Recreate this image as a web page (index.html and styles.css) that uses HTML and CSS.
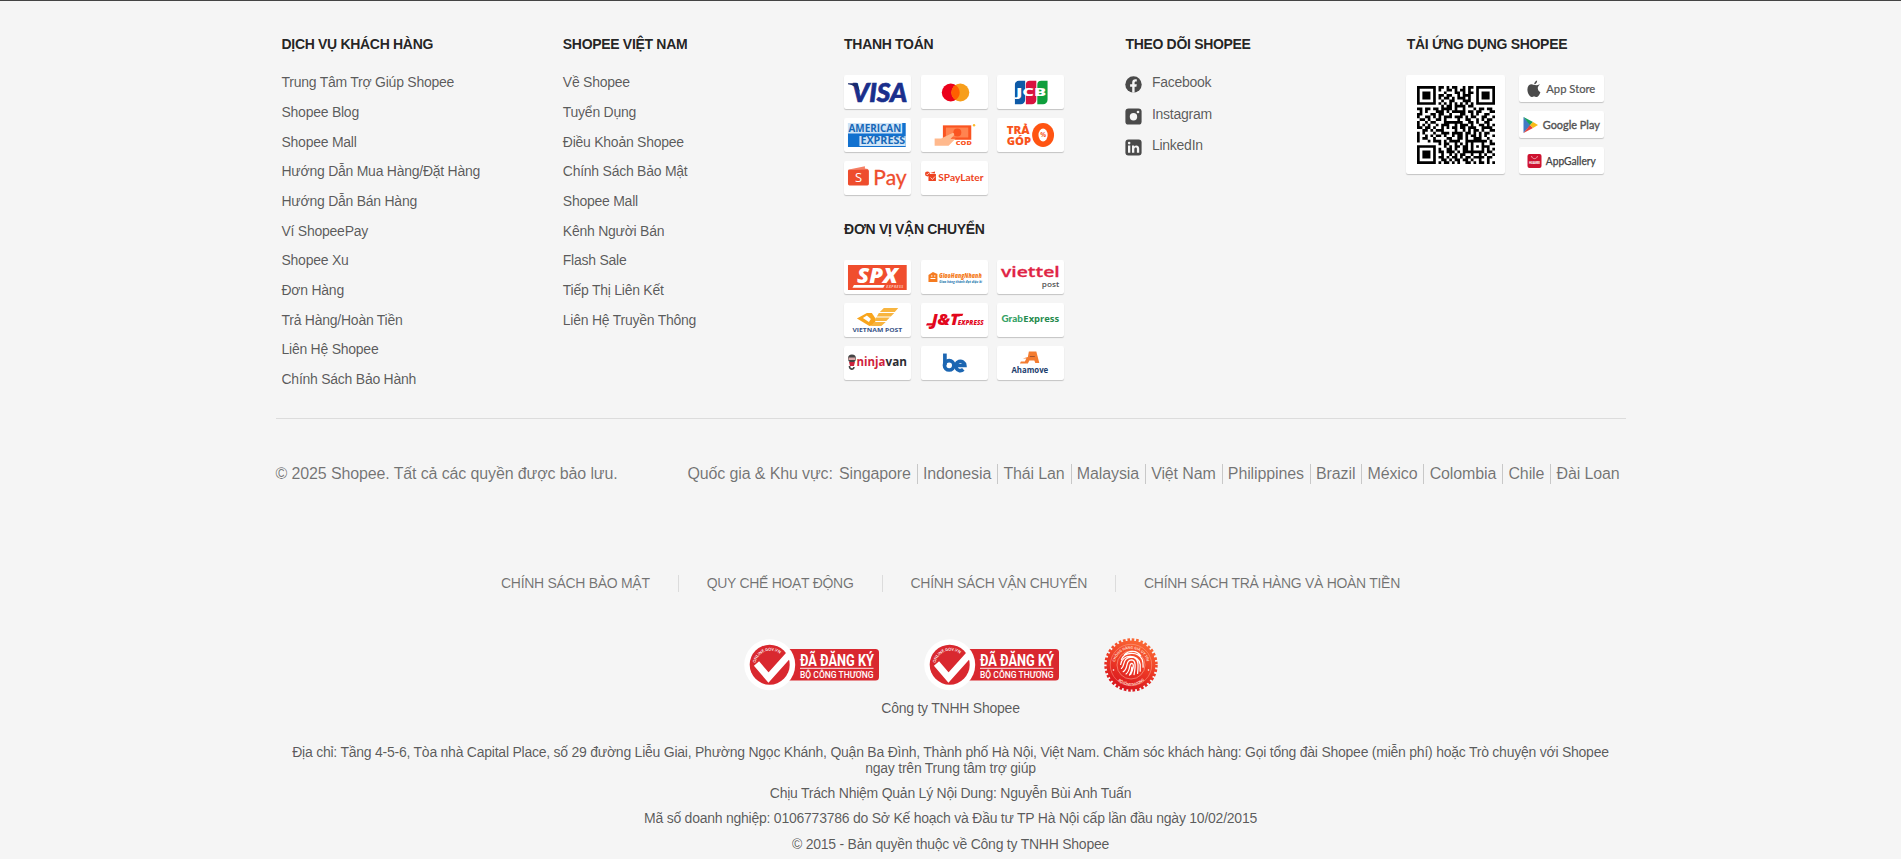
FILE: index.html
```
<!DOCTYPE html>
<html lang="vi">
<head>
<meta charset="utf-8">
<title>Shopee Việt Nam</title>
<link rel="stylesheet" href="styles.css">
</head>
<body>
<footer class="footer">
  <div class="columns">
    <section class="column">
      <h3 class="heading">DỊCH VỤ KHÁCH HÀNG</h3>
      <ul class="links">
        <li>Trung Tâm Trợ Giúp Shopee</li>
        <li>Shopee Blog</li>
        <li>Shopee Mall</li>
        <li>Hướng Dẫn Mua Hàng/Đặt Hàng</li>
        <li>Hướng Dẫn Bán Hàng</li>
        <li>Ví ShopeePay</li>
        <li>Shopee Xu</li>
        <li>Đơn Hàng</li>
        <li>Trả Hàng/Hoàn Tiền</li>
        <li>Liên Hệ Shopee</li>
        <li>Chính Sách Bảo Hành</li>
      </ul>
    </section>
    <section class="column">
      <h3 class="heading">SHOPEE VIỆT NAM</h3>
      <ul class="links">
        <li>Về Shopee</li>
        <li>Tuyển Dụng</li>
        <li>Điều Khoản Shopee</li>
        <li>Chính Sách Bảo Mật</li>
        <li>Shopee Mall</li>
        <li>Kênh Người Bán</li>
        <li>Flash Sale</li>
        <li>Tiếp Thị Liên Kết</li>
        <li>Liên Hệ Truyền Thông</li>
      </ul>
    </section>
    <section class="column">
      <h3 class="heading">THANH TOÁN</h3>
      <div class="tiles">
        <div class="tile"><svg viewBox="0 0 67.5 34">
          <text x="8" y="27.300" class="lato" font-weight="900" font-style="italic" font-size="26.500" fill="#1a2f8c" stroke="#1a2f8c" stroke-width=".7" textLength="55.500" lengthAdjust="spacingAndGlyphs">VISA</text>
          <path d="M4 8.300h9.500l2.500 8.700C13 12.500 9 10 4 9.300z" fill="#1a2a6c"/>
        </svg></div>
        <div class="tile"><svg viewBox="0 0 67.5 34">
          <circle cx="29.900" cy="17.500" r="9" fill="#eb001b"/><circle cx="39.500" cy="17.500" r="9" fill="#f79e1b"/>
          <path d="M34.700 9.900a9 9 0 0 1 0 15.200a9 9 0 0 1 0-15.200z" fill="#ff5f00"/>
        </svg></div>
        <div class="tile"><svg viewBox="0 0 67.5 34">
          <path d="M22 5.800h6.300v19a4.500 4.500 0 0 1-4.500 4.500h-5.800v-19.500a4 4 0 0 1 4-4z" fill="#0e5aa7"/>
          <path d="M33 5.800h6.500v19a4.500 4.500 0 0 1-4.500 4.500h-6v-19.500a4 4 0 0 1 4-4z" fill="#d8133f"/>
          <path d="M44.500 5.800h6.300v19a4.500 4.500 0 0 1-4.500 4.500h-5.800v-19.500a4 4 0 0 1 4-4z" fill="#0f9f3c"/>
          <text x="19" y="21" class="open" font-weight="800" font-size="9.800" fill="#fff" textLength="30.500" lengthAdjust="spacingAndGlyphs">JCB</text>
        </svg></div>
        <div class="tile"><svg viewBox="0 0 67.5 34">
          <path d="M4 5h58v24H4z" fill="#1271cf"/>
          <path d="M4 5h54.500v10.500H4zM15.500 18H62v10H15.500z" fill="#cfe4f7"/>
          <text x="4.500" y="13.600" class="open" font-weight="700" font-size="9.800" fill="#1768b8" textLength="53" lengthAdjust="spacingAndGlyphs">AMERICAN</text>
          <text x="16.500" y="26.500" class="open" font-weight="700" font-size="9.800" fill="#1768b8" textLength="45" lengthAdjust="spacingAndGlyphs">EXPRESS</text>
        </svg></div>
        <div class="tile"><svg viewBox="0 0 67.5 34">
          <path d="M22 7.300h28.500v14.500H22z" fill="#fa5421"/><path d="M25 9.500h22.500v10H25z" fill="#ff8350"/>
          <circle cx="36.500" cy="14.500" r="4" fill="#fa5421"/>
          <path d="M13.700 20.500h6.500l11-5.300c2-.8 3 1.200 1.500 2.500l-3 3h5l-7 7H13.700z" fill="#ffb98d"/>
          <text x="35" y="27" class="open" font-weight="800" font-size="5.500" fill="#fa5421" textLength="16" lengthAdjust="spacingAndGlyphs">COD</text>
          <circle cx="53.300" cy="7.200" r="1.200" fill="#fdbb2d"/>
        </svg></div>
        <div class="tile"><svg viewBox="0 0 67.5 34">
          <text x="9.800" y="16.300" class="open" font-weight="800" font-size="11" fill="#f8541b" textLength="23" lengthAdjust="spacingAndGlyphs">TRẢ</text>
          <text x="9.800" y="26.600" class="open" font-weight="800" font-size="11" fill="#f8541b" textLength="24.500" lengthAdjust="spacingAndGlyphs">GÓP</text>
          <ellipse cx="46.300" cy="17" rx="11" ry="12" fill="#ff5412"/><ellipse cx="46.300" cy="17" rx="4.600" ry="6.500" fill="#fff"/>
          <text x="46.300" y="19.400" class="open" font-weight="700" font-size="6.500" fill="#f8541b" text-anchor="middle">%</text>
        </svg></div>
        <div class="tile"><svg viewBox="0 0 67.5 34">
          <path d="M5 8.500l16-3.200v2.200l3 .5v1z" fill="#f58065"/>
          <rect x="4" y="8.500" width="21" height="16" rx="1.500" fill="#ee4d2d"/>
          <text x="14.700" y="21.300" class="open" font-size="13" fill="#fff" text-anchor="middle">S</text>
          <text x="29.500" y="24" class="lato" font-size="20.500" fill="#ee4d2d" stroke="#ee4d2d" stroke-width=".3" textLength="33.500" lengthAdjust="spacingAndGlyphs">Pay</text>
        </svg></div>
        <div class="tile"><svg viewBox="0 0 67.5 34">
          <path d="M7.500 13h7.500v7H7.500z" fill="#ee4321"/><circle cx="6.500" cy="13" r="2.500" fill="#ee4321"/>
          <path d="M5.300 12.800l1 1 1.800-2M9.500 16.500l2 2 2.500-3" fill="none" stroke="#fff" stroke-width=".7"/><path d="M9 12l5-1.500v2z" fill="#ee4321"/>
          <text x="17.300" y="20" class="lato" font-weight="700" font-size="8.600" fill="#ee4321" textLength="45.500" lengthAdjust="spacingAndGlyphs">SPayLater</text>
        </svg></div>
      </div>
      <h3 class="heading heading-second">ĐƠN VỊ VẬN CHUYỂN</h3>
      <div class="tiles">
        <div class="tile"><svg viewBox="0 0 67.5 34">
          <path d="M4 5h59v25H4z" fill="#f04e2e"/>
          <text x="13" y="23.300" class="open" font-weight="800" font-style="italic" font-size="22" fill="#fff" textLength="41" lengthAdjust="spacingAndGlyphs">SPX</text>
          <path d="M10 25h31l-1.500 2.800H8.500z" fill="#fff"/>
          <text x="42.500" y="27.700" class="open" font-weight="700" font-style="italic" font-size="3.600" fill="#fbc5b8" textLength="17">EXPRESS</text>
        </svg></div>
        <div class="tile"><svg viewBox="0 0 67.5 34">
          <path d="M7.500 15l4.500-3 4.500 2v8H7.500z" fill="#f57b20"/><path d="M9.500 18.500h5M10 16h1.500M13 16h1.500" stroke="#fff" stroke-width="1"/>
          <text x="18" y="18.300" class="open" font-weight="800" font-style="italic" font-size="6.500" fill="#f57b20" textLength="43" lengthAdjust="spacingAndGlyphs">GiaoHangNhanh</text>
          <text x="18.300" y="22.600" class="open" font-weight="700" font-style="italic" font-size="3.200" fill="#2278ae" textLength="43" lengthAdjust="spacingAndGlyphs">Giao hàng thành đạt diệu kì</text>
        </svg></div>
        <div class="tile"><svg viewBox="0 0 67.5 34">
          <text x="4" y="17.300" class="open" font-weight="600" font-size="15" fill="#df2445" stroke="#df2445" stroke-width=".3" textLength="59" lengthAdjust="spacingAndGlyphs">viettel</text>
          <text x="45" y="26.800" class="open" font-weight="600" font-size="7.800" fill="#555" textLength="17.500" lengthAdjust="spacingAndGlyphs">post</text>
        </svg></div>
        <div class="tile"><svg viewBox="0 0 67.5 34">
          <path d="M13 15.500l10-5.500h5l4 6-1.500 6-5 1z" fill="#f8a51c"/><path d="M19 15l4-2.500 4 3.500-2 3z" fill="#fff"/>
          <path d="M40 5h14.500l-3.500 4H36zM35 10h15.500l-3.500 3.500H33zM32 14.500h14l-3.500 3.500H31zM30.500 19h11.500l-4.500 4H27z" fill="#f8b540"/>
          <text x="8.500" y="29" class="open" font-weight="700" font-size="4.600" fill="#375387" textLength="50" lengthAdjust="spacingAndGlyphs">VIETNAM POST</text>
        </svg></div>
        <div class="tile"><svg viewBox="0 0 67.5 34">
          <text x="10.500" y="22.500" class="open" font-weight="800" font-style="italic" font-size="16" fill="#e2071d" textLength="28" lengthAdjust="spacingAndGlyphs">J&amp;T</text>
          <path d="M6 20.300h7l-1.500 2.300H5zM32 10.700h10.500l-1 2.300H31z" fill="#e2071d"/>
          <text x="37" y="22.500" class="open" font-weight="800" font-style="italic" font-size="7" fill="#e2071d" textLength="26" lengthAdjust="spacingAndGlyphs">EXPRESS</text>
        </svg></div>
        <div class="tile"><svg viewBox="0 0 67.5 34">
          <text x="4.500" y="18.800" class="lato" font-weight="900" font-size="9.500" fill="#36a266" textLength="21.500" lengthAdjust="spacingAndGlyphs">Grab</text>
          <text x="26.500" y="18.800" class="open" font-weight="700" font-size="9" fill="#268b4e" textLength="36" lengthAdjust="spacingAndGlyphs">Express</text>
        </svg></div>
        <div class="tile"><svg viewBox="0 0 67.5 34">
          <circle cx="8" cy="12.500" r="4" fill="#444"/><path d="M4.500 11.500h7v2.500h-7z" fill="#d9a8a8"/><path d="M5 16h6l-1 4H6z" fill="#c9253d"/><path d="M5.500 20c0 4 4.500 4 4.500 1" fill="none" stroke="#444" stroke-width="1.600"/>
          <text x="12.500" y="19.700" class="open" font-weight="700" font-size="12.500" fill="#cf1f3c" textLength="29" lengthAdjust="spacingAndGlyphs">ninja</text>
          <text x="41.800" y="19.700" class="open" font-weight="700" font-size="12.500" fill="#2d2d33" textLength="21.500" lengthAdjust="spacingAndGlyphs">van</text>
        </svg></div>
        <div class="tile"><svg viewBox="0 0 67.5 34">
          <g fill="none" stroke="#1c66b2" stroke-width="3.700"><path d="M24 7.500v11.700"/><circle cx="28.300" cy="19.300" r="4.700"/><path d="M36 19.500h8a4.500 4.700 0 1 0-1.500 4"/></g>
        </svg></div>
        <div class="tile"><svg viewBox="0 0 67.5 34">
          <path d="M32 5.500h7.500L42.500 17h-4l-1-2.500h-5L31 17.500h-4l2.500-5H26l5-1.500zM24 15.500h4l-1 2h-4z" fill="#f47c30"/><path d="M33 10.500h5" stroke="#8a4730" stroke-width=".8"/>
          <text x="14.500" y="26.600" class="open" font-weight="700" font-size="8" fill="#1d416e" textLength="37" lengthAdjust="spacingAndGlyphs">Ahamove</text>
        </svg></div>
      </div>
    </section>
    <section class="column">
      <h3 class="heading">THEO DÕI SHOPEE</h3>
      <ul class="social">
        <li><svg viewBox="0 0 17 17"><circle cx="8.500" cy="8.500" r="8.200" fill="#4a4a4a"/><path d="M7.200 16.700v-6H5.100V8.200h2.100V6.600c0-2.300 1.300-3.300 3.100-3.300.8 0 1.500.1 1.500.1v2h-1c-1 0-1.200.6-1.200 1.200v1.600h2.200l-.4 2.500H9.600v6z" fill="#f5f5f5"/></svg>Facebook</li>
        <li><svg viewBox="0 0 17 17"><rect x=".4" y=".4" width="16.200" height="16.200" rx="3.200" fill="#4a4a4a"/><circle cx="8.500" cy="8.700" r="3.700" fill="#f5f5f5"/><circle cx="13" cy="4" r="1.300" fill="#f5f5f5"/></svg>Instagram</li>
        <li><svg viewBox="0 0 17 17"><rect x=".4" y=".4" width="16.200" height="16.200" rx="3" fill="#4a4a4a"/><path d="M3 6.500h2.300v7.300H3zM7 6.500h2.200v1c1.200-1.800 5-1.500 5 2v4.300h-2.300V10c0-2.200-2.600-1.900-2.600 0v3.800H7z" fill="#f5f5f5"/><circle cx="4.150" cy="4.100" r="1.300" fill="#f5f5f5"/></svg>LinkedIn</li>
      </ul>
    </section>
    <section class="column">
      <h3 class="heading">TẢI ỨNG DỤNG SHOPEE</h3>
      <div class="download">
        <div class="qr"><svg id="qr" viewBox="0 0 29 29"></svg></div>
        <div class="stores">
          <div class="store"><svg viewBox="0 0 85 27">
            <path d="M17.900 9.500c1.200 0 2.200-.8 3.200-.7 0 0-2.500 1.500-2.300 4 .1 2.600 2.600 3.600 2.600 3.600-1 2.800-2.500 4.800-3.900 4.800-1 0-1.300-.5-2.400-.5s-1.500.5-2.400.5c-2 0-4.300-4-4.300-7.500 0-3.400 2-5.300 4.200-5.300 1.300 0 2.400.9 3 .9zM15.200 8.400c0-1.800 1.200-3.300 2.900-3.800.2 2-1.200 3.700-2.900 3.800z" fill="#4b4b4b" transform="translate(0 .8)"/>
            <text x="27.300" y="18" class="lato" font-size="11.500" fill="#555" stroke="#555" stroke-width=".2" textLength="49" lengthAdjust="spacingAndGlyphs">App Store</text></svg></div>
          <div class="store"><svg viewBox="0 0 85 27">
            <path d="M4.500 6v16l7-8z" fill="#4379c4"/><path d="M4.500 6l9.500 5-3 3.200z" fill="#16a15b"/><path d="M4.500 22l6.500-8 3 3z" fill="#e8413a"/><path d="M14 11l5 3-5 3-3-3z" fill="#f8bb16"/>
            <text x="23.800" y="18" class="lato" font-size="11.500" fill="#555" stroke="#555" stroke-width=".4" textLength="57" lengthAdjust="spacingAndGlyphs">Google Play</text></svg></div>
          <div class="store"><svg viewBox="0 0 85 27">
            <rect x="8.500" y="7" width="14" height="14" rx="2" fill="#ce1230"/><path d="M12.500 9c.5 3.500 5.500 3.500 6 0" fill="none" stroke="#f3b6c0" stroke-width=".8"/><text x="10" y="16.800" class="open" font-weight="700" font-size="3" fill="#fff" textLength="11">HUAWEI</text>
            <text x="26.800" y="17.600" class="lato" font-size="10.500" fill="#444" stroke="#444" stroke-width=".25" textLength="50" lengthAdjust="spacingAndGlyphs">AppGallery</text></svg></div>
        </div>
      </div>
    </section>
  </div>

  <div class="legal">
    <div>© 2025 Shopee. Tất cả các quyền được bảo lưu.</div>
    <div class="countries">
      <span class="label">Quốc gia &amp; Khu vực:</span>
      <span>Singapore</span><span>Indonesia</span><span>Thái Lan</span><span>Malaysia</span><span>Việt Nam</span><span>Philippines</span><span>Brazil</span><span>México</span><span>Colombia</span><span>Chile</span><span>Đài Loan</span>
    </div>
  </div>

  <nav class="policies">
    <span>CHÍNH SÁCH BẢO MẬT</span><span>QUY CHẾ HOẠT ĐỘNG</span><span>CHÍNH SÁCH VẬN CHUYỂN</span><span>CHÍNH SÁCH TRẢ HÀNG VÀ HOÀN TIỀN</span>
  </nav>

  <div class="badges">
    <svg class="badge" viewBox="0 0 136 54">
      <defs>
        <g id="registered">
          <rect x="40" y="11" width="95" height="31.500" rx="3.500" fill="#d9282f"/>
          <circle cx="25.700" cy="26.700" r="25.500" fill="#fff"/>
          <circle cx="25.700" cy="26.700" r="20" fill="#d9282f"/>
          <path id="arc" d="M11.500 25a15.300 15.300 0 0 1 27.500-6" fill="none"/>
          <text class="open" font-weight="600" font-size="4" fill="#fff"><textPath href="#arc" textLength="31">ONLINE.GOV.VN</textPath></text>
          <path d="M12.500 25.500l12 14L46.500 15" fill="none" stroke="#fff" stroke-width="6.800"/>
          <text x="56" y="27.500" class="narrow" font-weight="700" font-size="16" fill="#fff" textLength="74" lengthAdjust="spacingAndGlyphs">ĐÃ ĐĂNG KÝ</text>
          <path d="M56 30.300h73.500" stroke="#fff" stroke-width=".9"/>
          <text x="56" y="39.800" class="roboto" font-weight="500" font-size="9.500" fill="#fff" textLength="73.500" lengthAdjust="spacingAndGlyphs">BỘ CÔNG THƯƠNG</text>
        </g>
      </defs>
      <use href="#registered"/>
    </svg>
    <svg class="badge" viewBox="0 0 136 54"><use href="#registered"/></svg>
    <svg class="seal" viewBox="0 0 54 54">
      <defs><linearGradient id="sealFill" x1=".7" y1="0" x2=".3" y2="1"><stop offset="0" stop-color="#fb6a35"/><stop offset=".5" stop-color="#ed3a26"/><stop offset="1" stop-color="#d8141d"/></linearGradient></defs>
      <circle cx="27" cy="27" r="24.500" fill="url(#sealFill)"/>
      <circle cx="27" cy="27" r="25.200" fill="none" stroke="url(#sealFill)" stroke-width="3" stroke-dasharray="2.600 1.798"/>
      <circle cx="27" cy="27" r="20.700" fill="none" stroke="#ffc0a8" stroke-width=".4"/>
      <circle cx="27" cy="27" r="14" fill="none" stroke="#ffc0a8" stroke-width=".5"/>
      <path id="sealTop" d="M10.800 27a16.200 16.200 0 0 1 32.400 0" fill="none"/>
      <path id="sealBottom" d="M8.300 29a18.700 18.700 0 0 0 37.400 0" fill="none"/>
      <text class="open" font-weight="700" font-size="3.600" fill="#ffd2c2"><textPath href="#sealTop" startOffset="3" textLength="44">CHỐNG HÀNG GIẢ UY TÍN</textPath></text>
      <text class="open" font-weight="700" font-size="3.600" fill="#ffd2c2"><textPath href="#sealBottom" startOffset="15" textLength="29">BỘ CÔNG THƯƠNG</textPath></text>
      <g fill="none" stroke="#fff" stroke-width="1.100" stroke-linecap="round" transform="translate(27 27) scale(1.15 1.120) translate(-25.800 -27)">
        <path d="M20 18c4-4.500 11-4 14 .5M17.500 22c2.500-6.500 14-8 18 0 1 2.500.8 5 .8 7M16.800 26.500c1-9.500 15.500-10 17 0v6M17.500 30c3-1.500.5-9.500 8.500-10 7.500 0 6 9 5.500 14.500M19 33c5-3 1.500-10 7-10.500 5 .2 3.200 8 2.500 13M21.500 35c4.500-3.500 2-9.500 5-9.500 2.800.5.500 7-1 10M24.500 36c1.500-2 2-5 2-7"/>
      </g>
      <circle cx="9.500" cy="32" r=".8" fill="#fff"/><circle cx="44.500" cy="32" r=".8" fill="#fff"/>
    </svg>
  </div>

  <div class="company">
    <p class="company-name">Công ty TNHH Shopee</p>
    <p>Địa chỉ: Tầng 4-5-6, Tòa nhà Capital Place, số 29 đường Liễu Giai, Phường Ngọc Khánh, Quận Ba Đình, Thành phố Hà Nội, Việt Nam. Chăm sóc khách hàng: Gọi tổng đài Shopee (miễn phí) hoặc Trò chuyện với Shopee<br>ngay trên Trung tâm trợ giúp</p>
    <p>Chịu Trách Nhiệm Quản Lý Nội Dung: Nguyễn Bùi Anh Tuấn</p>
    <p>Mã số doanh nghiệp: 0106773786 do Sở Kế hoạch và Đầu tư TP Hà Nội cấp lần đầu ngày 10/02/2015</p>
    <p>© 2015 - Bản quyền thuộc về Công ty TNHH Shopee</p>
  </div>
</footer>
<script src="qr.js"></script>
</body>
</html>
```
FILE: styles.css
```
* { box-sizing: border-box; }

body {
  margin: 0;
  height: 859px;
  overflow: hidden;
  background: #f5f5f5;
  color: rgba(0, 0, 0, .65);
  font: 14px/16px "Liberation Sans", Arial, sans-serif;
  letter-spacing: -.25px;
}

ul, p, h3 { margin: 0; padding: 0; list-style: none; }
svg { display: block; letter-spacing: 0; }

.footer { border-top: 1px solid #444; }

.columns {
  display: flex;
  width: 1350px;
  height: 418px;
  margin: 0 auto;
  padding: 35px 0 0 6px;
  border-bottom: 1px solid #dcdcdc;
}
.column { flex: 0 0 281.3px; }
.column:last-child { flex-basis: 210px; }

.heading {
  margin-bottom: 23px;
  color: rgba(0, 0, 0, .87);
  font-size: 14px;
  font-weight: 700;
  line-height: 16px;
  letter-spacing: -.31px;
  white-space: nowrap;
}
.heading-second { margin-top: 26px; }

.links { margin-top: -24px; padding-top: 23.3px; }
.links li { margin-bottom: 13.7px; white-space: nowrap; }

.tiles {
  display: grid;
  grid-template-columns: repeat(3, 67.2px);
  gap: 9px 9.4px;
}
.tile, .store, .qr {
  background: #fff;
  border-radius: 2px;
  box-shadow: 0 1px 1px rgba(0, 0, 0, .2);
}
.tile { height: 34px; }
.tile svg, .store svg { width: 100%; height: 100%; }

.social { margin-top: -1px; }
.social li {
  display: flex;
  gap: 9.5px;
  height: 31.5px;
}
.social svg { width: 17px; height: 17px; margin-top: 2px; }

.download { display: flex; gap: 14px; margin-left: -.7px; }
.qr { width: 99px; height: 99px; padding: 10.5px; }
.qr svg { width: 78px; height: 78px; }
.stores { display: grid; gap: 9px; }
.store { width: 85px; height: 27px; }

.legal {
  display: flex;
  justify-content: space-between;
  width: 1350px;
  margin: 45px auto 0;
  font-size: 16px;
  line-height: 20px;
  letter-spacing: -.125px;
  color: rgba(0, 0, 0, .54);
}
.countries { display: flex; }
.countries span { padding: 0 6px 0 5.2px; border-right: 1px solid #c8c8c8; }
.countries .label { padding: 0 1px 0 0; }
.countries .label, .countries span:last-child { border-right: 0; }

.policies {
  display: flex;
  justify-content: center;
  margin-top: 91px;
  line-height: 17px;
  letter-spacing: -.3px;
  color: rgba(0, 0, 0, .54);
}
.policies span { padding: 0 28px; border-right: 1px solid #dcdcdc; }
.policies span:last-child { border-right: 0; }

.badges {
  display: flex;
  justify-content: center;
  gap: 44px;
  margin-top: 46px;
}
.badge { width: 136px; height: 54px; }
.seal { width: 54px; height: 54px; }

.company {
  width: 1350px;
  margin: 8px auto 0;
  text-align: center;
  letter-spacing: -.24px;
}
.company p { margin-bottom: 9.2px; }
.company .company-name { margin-bottom: 28px; }

.lato { font-family: Lato, sans-serif; }
.open { font-family: "Open Sans", sans-serif; }
.roboto { font-family: Roboto, sans-serif; }
.narrow { font-family: "Liberation Sans Narrow", Roboto, sans-serif; }
```
FILE: qr.js
```
// One string per module row of the app download code.
const rows = [
  "#######.##.#.##..#.##.#######",
  "#.....#.#..##.#.##.#..#.....#",
  "#.###.#...#...##.#.##.#.###.#",
  "#.###.#.##.##..#.###..#.###.#",
  "#.###.#.#.##.#.###.#..#.###.#",
  "#.....#..#..##...###..#.....#",
  "#######.#.#.#.#.#.#.#.#######",
  ".........#.##.####.##........",
  "##.##.##.####.#..#...#.##.##.",
  ".#.#...###.#.#####.##.##...##",
  "##...##.##..#...##..#.#..##..",
  "#..##.#.#.###.###.#.##..##..#",
  ".##.#..##.#....#..##..#.#.##.",
  "#..#.##...#######..##.#..##..",
  "#.#.#..#.###..#.###.#..##.#.#",
  "##.##.#..#.#.##.##.###..####.",
  "..##.#.###....#..#.#.##.#..##",
  "#.#...#..###.####.##.#.#.##..",
  "#..#.#.##.#..#.##.#.##.#.#..#",
  "#.##..#....##..##.#..###..#..",
  "#...#.###.#.####..########.#.",
  "........#.##..#.#.#.#...#..##",
  "#######...#.#.##.##.#.#.###..",
  "#.....#.#..##.#..##.#...#.#.#",
  "#.###.#.##.###.#.########.##.",
  "#.###.#..#..#.#.##..#..#.#..#",
  "#.###.#.##.#.##.#.##.####.##.",
  "#.....#..##.#.##.##.#..#..#..",
  "#######.#.##.#.#..##.#.##.#.#"
];
let d = "";
rows.forEach((row, y) => {
  [...row].forEach((cell, x) => {
    if (cell === "#") d += `M${x} ${y}h1v1h-1z`;
  });
});
const path = document.createElementNS("http://www.w3.org/2000/svg", "path");
path.setAttribute("d", d);
document.getElementById("qr").append(path);
```
